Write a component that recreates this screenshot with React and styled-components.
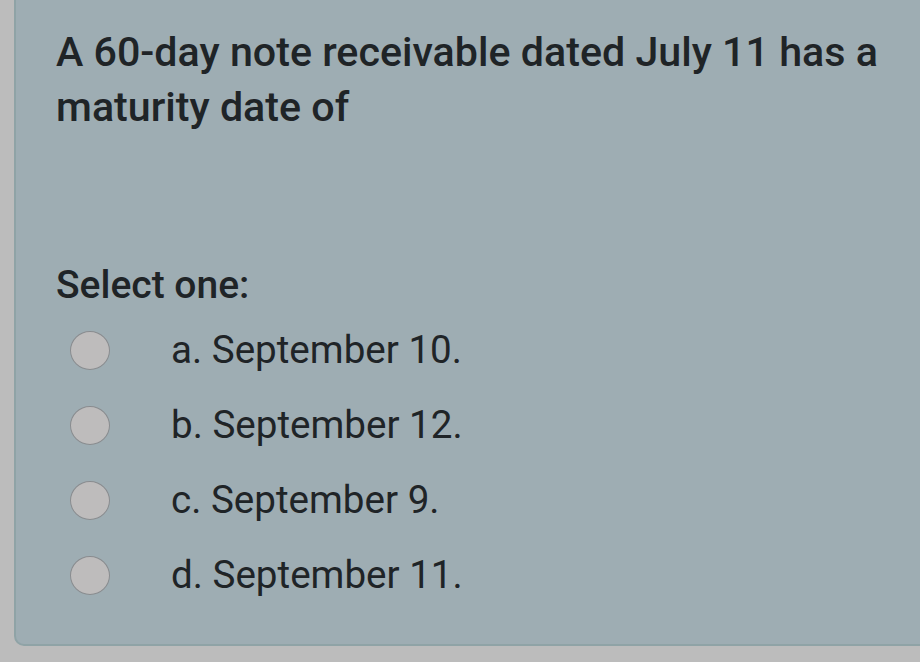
import { createGlobalStyle, styled } from "styled-components";

const GlobalStyle = createGlobalStyle`
  html, body {
    margin: 0;
    padding: 0;
    background: #bcbcbc;
    overflow: hidden;
  }
  body {
    font-family: Roboto, "Liberation Sans", sans-serif;
  }
`;

const Page = styled.div`
  width: 920px;
  height: 662px;
  padding: 0 0 16px 14px;
  box-sizing: border-box;
  display: flex;
`;

const Card = styled.div`
  flex: 1;
  margin-top: -20px;
  margin-right: -20px;
  background: #9eadb3;
  border: 2px solid #8fa3a6;
  border-radius: 10px;
  padding: 43px 0 0 40px;
  color: #1f2427;
`;

const Question = styled.div`
  font-size: 41.2px;
  font-weight: 500;
  line-height: 55px;
  width: 845px;
  height: 237px;
`;

const Prompt = styled.div`
  font-size: 39px;
  font-weight: 500;
  line-height: 46px;
  margin-bottom: 4px;
`;

const Options = styled.div`
  display: flex;
  flex-direction: column;
`;

const Option = styled.label`
  display: flex;
  align-items: center;
  height: 75px;
`;

const Radio = styled.span`
  width: 38px;
  height: 37px;
  border-radius: 50%;
  background: #bebcbc;
  border: 1.5px solid #898c8f;
  margin: 2px 61px 0 14px;
  flex-shrink: 0;
`;

const OptionText = styled.span`
  font-size: 38.6px;
  font-weight: 400;
`;

const options = [
  "a. September 10.",
  "b. September 12.",
  "c. September 9.",
  "d. September 11.",
];

export default function App() {
  return (
    <>
      <GlobalStyle />
      <Page>
        <Card>
          <Question>
            A 60-day note receivable dated July 11 has a maturity date of
          </Question>
          <Prompt>Select one:</Prompt>
          <Options>
            {options.map((text) => (
              <Option key={text}>
                <Radio />
                <OptionText>{text}</OptionText>
              </Option>
            ))}
          </Options>
        </Card>
      </Page>
    </>
  );
}
